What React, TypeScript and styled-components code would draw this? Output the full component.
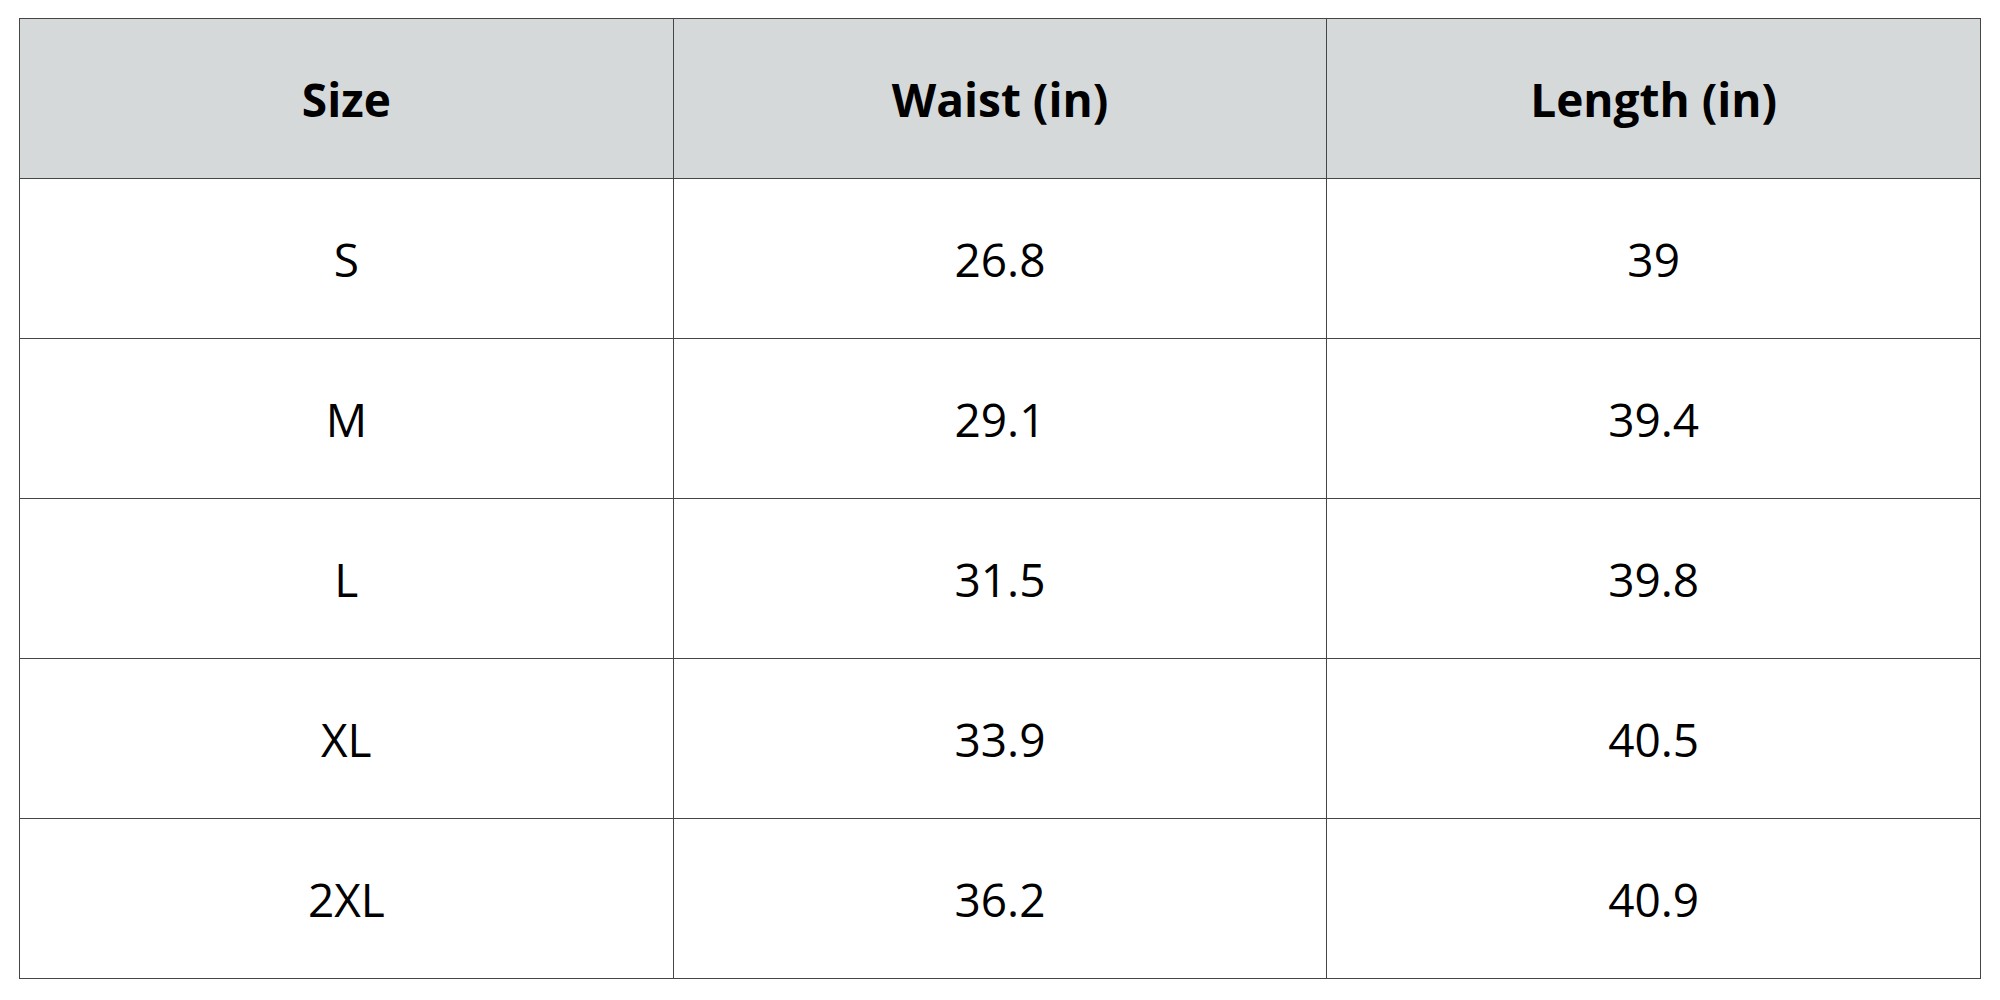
import React from 'react';
import styled, { createGlobalStyle } from 'styled-components';

const GlobalStyle = createGlobalStyle`
  html, body {
    margin: 0;
    padding: 0;
    background: #ffffff;
  }
  body {
    font-family: 'Open Sans', 'Liberation Sans', sans-serif;
    color: #000000;
  }
`;

const rows = [
  { size: 'S', waist: '26.8', length: '39' },
  { size: 'M', waist: '29.1', length: '39.4' },
  { size: 'L', waist: '31.5', length: '39.8' },
  { size: 'XL', waist: '33.9', length: '40.5' },
  { size: '2XL', waist: '36.2', length: '40.9' },
];

const Page = styled.div`
  width: 2000px;
  height: 1000px;
  padding: 18px 19px 0 19px;
  box-sizing: border-box;
`;

const Table = styled.table`
  width: 1962px;
  border-collapse: collapse;
  table-layout: fixed;
`;

const HeadCell = styled.th`
  height: 159px;
  background: #d5d9da;
  border: 1.5px solid #454545;
  font-size: 46px;
  font-weight: 700;
  text-align: center;
  vertical-align: middle;
  padding: 0;
`;

const Cell = styled.td`
  height: 159px;
  border: 1.5px solid #454545;
  font-size: 46px;
  font-weight: 400;
  text-align: center;
  vertical-align: middle;
  padding: 0;
`;

export default function App() {
  return (
    <>
      <GlobalStyle />
      <Page>
        <Table>
          <thead>
            <tr>
              <HeadCell>Size</HeadCell>
              <HeadCell>Waist (in)</HeadCell>
              <HeadCell>Length (in)</HeadCell>
            </tr>
          </thead>
          <tbody>
            {rows.map((r) => (
              <tr key={r.size}>
                <Cell>{r.size}</Cell>
                <Cell>{r.waist}</Cell>
                <Cell>{r.length}</Cell>
              </tr>
            ))}
          </tbody>
        </Table>
      </Page>
    </>
  );
}
